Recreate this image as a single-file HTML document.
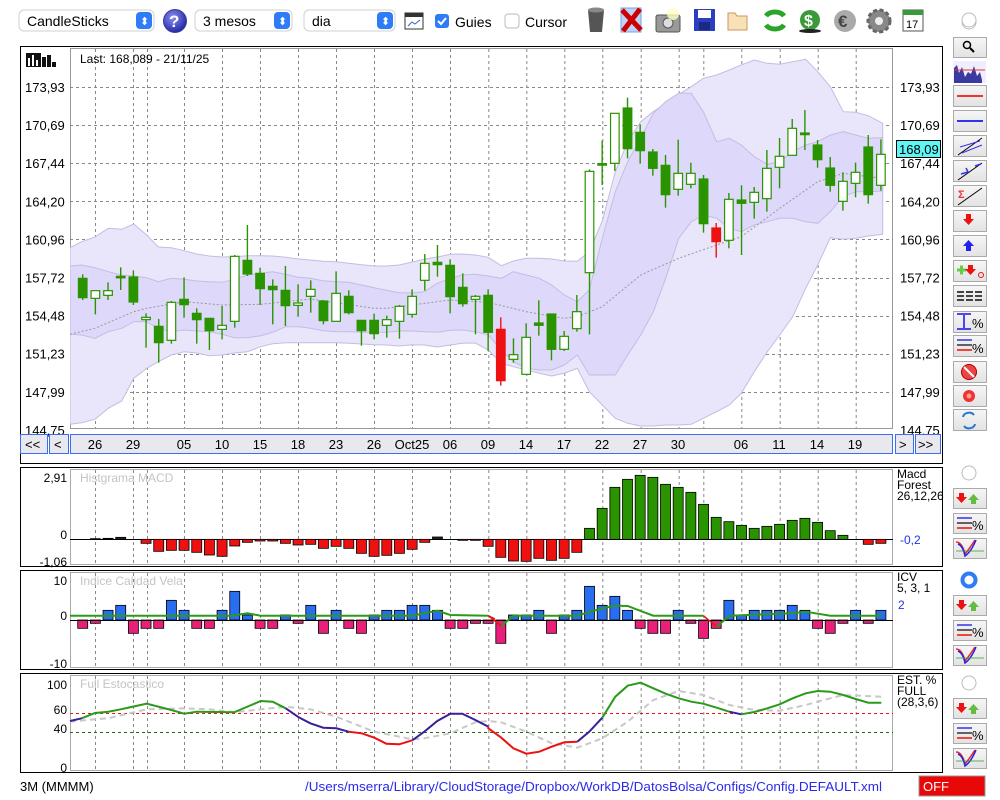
<!DOCTYPE html>
<html><head><meta charset="utf-8"><style>
html,body{margin:0;padding:0;background:#fff;width:1000px;height:800px;overflow:hidden}
svg{display:block;font-family:"Liberation Sans",Arial,sans-serif}
</style></head><body>
<svg id="s" width="1000" height="800" viewBox="0 0 1000 800" xmlns="http://www.w3.org/2000/svg">
<defs>
<clipPath id="cp"><rect x="70" y="48" width="823" height="380"/></clipPath>
<linearGradient id="btn" x1="0" y1="0" x2="0" y2="1"><stop offset="0" stop-color="#f6f6f6"/><stop offset="1" stop-color="#e2e2e2"/></linearGradient>
<radialGradient id="help" cx="0.4" cy="0.35" r="0.7"><stop offset="0" stop-color="#8a8ff0"/><stop offset="1" stop-color="#1c22a0"/></radialGradient>
</defs>
<g font-size="14">
<rect x="19" y="10" width="135" height="21" rx="5" fill="#fff" stroke="#d0d0d0"/>
<text x="27" y="26">CandleSticks</text>
<rect x="136" y="12" width="16" height="17" rx="4" fill="#2e7cf6"/><text x="140" y="25" fill="#fff" font-size="11">⬍</text>
<circle cx="175" cy="21" r="11.5" fill="url(#help)" stroke="#3a3aa0"/><text x="169" y="27" fill="#fff" font-size="17" font-weight="bold">?</text>
<rect x="195" y="10" width="97" height="21" rx="5" fill="#fff" stroke="#d0d0d0"/>
<text x="203" y="26">3 mesos</text>
<rect x="274" y="12" width="16" height="17" rx="4" fill="#2e7cf6"/><text x="278" y="25" fill="#fff" font-size="11">⬍</text>
<rect x="304" y="10" width="91" height="21" rx="5" fill="#fff" stroke="#d0d0d0"/>
<text x="312" y="26">dia</text>
<rect x="377" y="12" width="16" height="17" rx="4" fill="#2e7cf6"/><text x="381" y="25" fill="#fff" font-size="11">⬍</text>
<rect x="405" y="13" width="18" height="16" fill="#fff" stroke="#333"/><rect x="405" y="13" width="18" height="4" fill="#333"/><path d="M408 26 l4 -4 3 2 5 -4" stroke="#36c" fill="none"/>
<rect x="435" y="14" width="14" height="14" rx="3" fill="#2e7cf6"/><path d="M438 21 l3 3 5 -6" stroke="#fff" stroke-width="2" fill="none"/>
<text x="455" y="27">Guies</text>
<rect x="505" y="14" width="14" height="14" rx="3" fill="#fff" stroke="#bbb"/>
<text x="525" y="27">Cursor</text>
</g>
<path d="M588 10 h16 l-2 22 h-12z" fill="#555"/><ellipse cx="596" cy="10" rx="8" ry="2.5" fill="#888"/>
<rect x="621" y="8" width="20" height="24" fill="#bcd4f6" stroke="#7aa0e0"/><path d="M622 10 L641 30 M640 9 L623 31" stroke="#c00" stroke-width="5"/>
<rect x="656" y="15" width="24" height="17" rx="2" fill="#999" stroke="#555"/><circle cx="668" cy="23" r="5" fill="#ddd" stroke="#555"/><circle cx="673" cy="14" r="6" fill="#ffffc0" opacity="0.8"/>
<rect x="694" y="9" width="21" height="22" fill="#2a3fbf"/><rect x="698" y="10" width="13" height="8" fill="#fff"/><rect x="699" y="22" width="11" height="8" fill="#1a2a80"/>
<path d="M728 13 h7 l2 3 h10 v14 h-19z" fill="#f8e0b8" stroke="#c89a58"/>
<path d="M766 16 a10 7 0 0 1 18 0 M784 25 a10 7 0 0 1 -18 0" stroke="#2aa52a" stroke-width="5" fill="none"/>
<circle cx="810" cy="20" r="10" fill="#3a9a3a"/><text x="804" y="26" fill="#fff" font-size="16" font-weight="bold">$</text><ellipse cx="810" cy="31" rx="11" ry="2" fill="#222"/>
<circle cx="845" cy="21" r="11" fill="#aaa"/><text x="838" y="27" fill="#444" font-size="17" font-weight="bold">€</text>
<circle cx="879" cy="21" r="11" fill="#888" stroke="#666" stroke-width="3" stroke-dasharray="4 2.5"/><circle cx="879" cy="21" r="4" fill="#eee"/>
<rect x="903" y="10" width="20" height="21" fill="#fff" stroke="#555"/><rect x="903" y="10" width="20" height="5" fill="#3a9a3a"/><text x="906" y="28" font-size="11">17</text>
<circle cx="969" cy="22" r="7" fill="#fff" stroke="#bbb"/>

<rect x="20.5" y="46.5" width="922" height="417" fill="#fff" stroke="#000"/>
<rect x="70.5" y="48.5" width="822" height="380" fill="#fff" stroke="#999"/>
<rect x="20.5" y="467.5" width="922" height="99" fill="#fff" stroke="#000"/>
<rect x="70.5" y="469.5" width="822" height="95" fill="#fff" stroke="#aaa"/>
<rect x="20.5" y="570.5" width="922" height="99" fill="#fff" stroke="#000"/>
<rect x="70.5" y="572.5" width="822" height="95" fill="#fff" stroke="#aaa"/>
<rect x="20.5" y="673.5" width="922" height="99" fill="#fff" stroke="#000"/>
<rect x="70.5" y="675.5" width="822" height="95" fill="#fff" stroke="#aaa"/>
<g id="grid" stroke="#888" stroke-dasharray="3 3" stroke-width="1"></g>
<g id="bands" clip-path="url(#cp)"></g>
<g id="plots"></g>
<g fill="#111"><rect x="26" y="53" width="15" height="14"/><rect x="42" y="57" width="4" height="10"/><rect x="47" y="55" width="4" height="12"/><rect x="52" y="62" width="4" height="5"/></g>
<g fill="#fff"><rect x="28" y="58" width="2" height="8"/><rect x="32" y="55" width="2" height="11"/><rect x="36" y="60" width="2" height="6"/></g>
<text x="80" y="63" font-size="12">Last: 168,089 - 21/11/25</text>
<g font-size="13" id="ylab"></g>
<rect x="896.5" y="140.5" width="44" height="17" fill="#5ff5f5" stroke="#000"/>
<text x="899" y="154" font-size="13">168,09</text>
<g stroke="#3a6ef0" fill="#e8e8ee">
<rect x="20.5" y="434.5" width="27" height="19"/><rect x="49.5" y="434.5" width="19" height="19"/>
<rect x="70.5" y="434.5" width="822" height="19"/>
<rect x="895.5" y="434.5" width="18" height="19"/><rect x="915.5" y="434.5" width="25" height="19"/>
</g>
<g font-size="13" id="xlab"><text x="25" y="449">&lt;&lt;</text><text x="54" y="449">&lt;</text><text x="899" y="449">&gt;</text><text x="918" y="449">&gt;&gt;</text></g>
<g font-size="12" fill="#c4c4c4"><text x="80" y="482">Histgrama MACD</text><text x="80" y="585">Indice Calidad Vela</text><text x="80" y="688">Full Estocastico</text></g>
<g font-size="12" text-anchor="end">
<text x="67" y="482">2,91</text><text x="67" y="539">0</text><text x="67" y="566">-1,06</text>
<text x="67" y="585">10</text><text x="67" y="620">0</text><text x="67" y="668">-10</text>
<text x="67" y="689">100</text><text x="67" y="714">60</text><text x="67" y="733">40</text><text x="67" y="772">0</text>
</g>
<g font-size="12">
<text x="897" y="478">Macd</text><text x="897" y="489">Forest</text><text x="897" y="500">26,12,26</text>
<text x="900" y="544" fill="#2233ee">-0,2</text>
<text x="897" y="581">ICV</text><text x="897" y="592">5, 3, 1</text>
<text x="898" y="609" fill="#2233ee">2</text>
<text x="897" y="684">EST. %</text><text x="897" y="695">FULL</text><text x="897" y="706">(28,3,6)</text>
</g>
<text x="20" y="791" font-size="13">3M (MMMM)</text>
<text x="305" y="791" font-size="13" fill="#2a2aee" textLength="577" lengthAdjust="spacingAndGlyphs">/Users/mserra/Library/CloudStorage/Dropbox/WorkDB/DatosBolsa/Configs/Config.DEFAULT.xml</text>
<rect x="919" y="776" width="66" height="20" fill="#e80808" stroke="#999"/>
<text x="923" y="791" font-size="13" fill="#fff">OFF</text>
<g id="side"></g>
</svg>
<script>
var NS="http://www.w3.org/2000/svg";
function el(p,t,a){var e=document.createElementNS(NS,t);for(var k in a)e.setAttribute(k,a[k]);p.appendChild(e);return e;}
var S=document.getElementById('s'),G=document.getElementById('grid'),B=document.getElementById('bands'),P=document.getElementById('plots');
function cx(i){return 82.7+12.67*i;}
var gx=[95,133,147,184,222,260,298,336,374,412,450,488.3,526.3,564.3,602.3,640.7,678.7,703.3,741.3,779.7,817.7,855.7];
var panels=[[49,428],[470,564],[573,667],[676,770]];
gx.forEach(function(x){panels.forEach(function(p){el(G,'line',{x1:x+0.5,y1:p[0],x2:x+0.5,y2:p[1]});});});
var yl=['173,93','170,69','167,44','164,20','160,96','157,72','154,48','151,23','147,99','144,75'];
var YL=document.getElementById('ylab');
for(var k=0;k<10;k++){var y=87+k*38.1;if(k<9)el(G,'line',{x1:70,y1:Math.round(y)+0.5,x2:893,y2:Math.round(y)+0.5});
 var t=el(YL,'text',{x:25,y:y+5});t.textContent=yl[k];var t2=el(YL,'text',{x:900,y:y+5});t2.textContent=yl[k];}
var XL=document.getElementById('xlab');
[[95,'26'],[133,'29'],[184,'05'],[222,'10'],[260,'15'],[298,'18'],[336,'23'],[374,'26'],[412,'Oct25'],[450,'06'],[488,'09'],[526,'14'],[564,'17'],[602,'22'],[640,'27'],[678,'30'],[741,'06'],[779,'11'],[817,'14'],[855,'19']].forEach(function(a){var t=el(XL,'text',{x:a[0],y:449,'text-anchor':'middle'});t.textContent=a[1];});
function z4(a){return a.map(function(p){return [15+p[0]/3,45+p[1]/3];});}
function z5(a){return a.map(function(p){return [480+p[0]/3,45+p[1]/3];});}
function z6(a){return a.map(function(p){return [15+p[0]/3,465+p[1]/3];});}
function z7(a){return a.map(function(p){return [480+p[0]/3,465+p[1]/3];});}
function pts(a){return a.map(function(p){return p[0].toFixed(1)+','+p[1].toFixed(1);}).join(' ');}
var ou=z4([[165,608],[200,590],[240,576],[280,550],[320,553],[356,537],[395,570],[430,606],[469,608],[508,617],[545,627],[583,633],[622,636],[658,635],[697,632],[737,632],[773,633],[812,637],[851,642],[886,645],[925,649],[964,650],[1001,655],[1040,659],[1078,663],[1114,663],[1153,660],[1192,651],[1228,643],[1267,636],[1306,628],[1342,627],[1381,630],[1420,637]]).concat(z5([[64,662],[100,648],[139,640],[178,640],[215,642],[253,648],[292,649],[328,620],[367,528],[406,380],[443,290],[482,230],[520,200],[557,175],[596,148],[634,125],[670,100],[710,90],[748,75],[784,60],[823,45],[862,55],[899,58],[938,50],[977,43],[1013,80],[1051,125],[1090,200],[1127,202],[1165,212],[1208,235]]));
var ol=z4([[165,1138],[200,1133],[240,1123],[280,1090],[320,1068],[356,1000],[395,970],[430,950],[469,930],[508,920],[545,924],[583,932],[622,930],[658,924],[697,920],[737,905],[773,896],[812,893],[851,893],[886,893],[925,893],[964,893],[1001,895],[1040,897],[1078,899],[1114,900],[1153,903],[1192,899],[1228,900],[1267,906],[1306,900],[1342,895],[1381,894],[1420,915]]).concat(z5([[64,955],[100,965],[139,975],[178,985],[215,993],[253,985],[292,970],[328,1040],[367,1080],[406,1120],[443,1135],[482,1143],[520,1143],[557,1140],[596,1140],[634,1138],[670,1120],[710,1100],[748,1080],[784,1045],[823,980],[862,920],[899,870],[938,815],[977,730],[1013,660],[1051,578],[1090,583],[1127,580],[1165,573],[1208,568]]));
var iu=z4([[165,663],[200,660],[240,668],[280,680],[320,690],[356,693],[395,698],[430,710],[469,700],[508,703],[545,708],[583,710],[622,712],[658,703],[697,690],[737,685],[773,680],[812,688],[851,697],[886,700],[925,707],[964,710],[1001,712],[1040,720],[1078,728],[1114,736],[1153,743],[1192,744],[1228,740],[1267,715],[1306,700],[1342,690],[1381,688],[1420,693]]).concat(z5([[64,700],[100,680],[139,690],[178,700],[215,720],[253,750],[292,770],[328,735],[367,580],[406,440],[443,350],[482,280],[520,205],[557,170],[596,145],[634,145],[670,200],[710,290],[748,280],[784,300],[823,335],[862,358],[899,350],[938,320],[977,300],[1013,290],[1051,270],[1090,260],[1127,270],[1165,280],[1208,278]]));
var il=z4([[165,868],[200,870],[240,880],[280,860],[320,850],[356,830],[395,830],[430,850],[469,860],[508,855],[545,858],[583,860],[622,868],[658,878],[697,878],[737,872],[773,862],[812,845],[851,845],[886,850],[925,857],[964,860],[1001,860],[1040,862],[1078,862],[1114,862],[1153,858],[1192,858],[1228,860],[1267,862],[1306,856],[1342,855],[1381,860],[1420,870]]).concat(z5([[64,915],[100,950],[139,970],[178,975],[215,975],[253,960],[292,930],[328,990],[367,990],[406,990],[443,930],[482,870],[520,800],[557,700],[596,580],[634,530],[670,510],[710,520],[748,550],[784,560],[823,540],[862,530],[899,520],[938,520],[977,530],[1013,535],[1051,500],[1090,455],[1127,440],[1165,440],[1208,438]]));
el(B,'polygon',{points:pts(ou.concat(ol.slice().reverse())),fill:'#e9e6fb',stroke:'#c2bde2'});
el(B,'polygon',{points:pts(iu.concat(il.slice().reverse())),fill:'#ded8fa',stroke:'#c2bde2'});
var ma=z4([[165,868],[240,850],[356,800],[395,790],[508,770],[622,780],[737,778],[886,762],[1078,790],[1114,790],[1306,765],[1420,772]]).concat(z5([[139,800],[253,820],[292,815],[367,785],[482,690],[596,640],[710,600],[784,575],[899,490],[1013,410],[1090,385],[1204,400]]));
el(B,'polyline',{points:pts(ma),fill:'none',stroke:'#999','stroke-dasharray':'2 2'});
var C4=[[688,700,758,765,'F'],[737,737,760,808,'H'],[712,737,751,765,'H'],[667,694,698,735,'F'],[676,696,771,780,'F'],[805,817,824,908,'H'],[822,844,893,953,'F'],[768,772,886,896,'H'],[697,763,779,818,'F'],[790,805,824,896,'F'],[820,820,857,915,'F'],[783,841,853,883,'H'],[630,634,829,848,'H'],[540,646,687,693,'F'],[668,685,731,780,'F'],[703,724,734,838,'F'],[663,736,782,843,'F'],[718,774,781,815,'H'],[706,733,754,803,'H'],[765,768,827,838,'F'],[679,745,829,829,'H'],[736,754,803,808,'F'],[826,826,857,902,'F'],[806,826,866,883,'F'],[812,824,841,878,'H'],[780,784,829,881,'H'],[733,754,808,818,'H'],[627,655,706,737,'H'],[600,652,659,695,'F'],[643,661,755,805,'F'],[685,727,776,785,'F'],[750,754,763,868,'H'],[733,751,862,918,'F']];
var C5=[[817,853,1007,1022,'R'],[880,929,943,953,'H'],[835,877,988,988,'H'],[766,834,841,872,'F'],[807,807,913,946,'F'],[858,874,913,918,'H'],[750,800,851,860,'H'],[373,379,683,868,'H'],[287,356,359,420,'F'],[205,205,355,378,'H'],[158,189,311,340,'F'],[238,262,317,356,'F'],[312,321,370,392,'F'],[330,361,449,488,'F'],[284,385,433,452,'H'],[353,385,418,430,'H'],[390,402,536,563,'F'],[534,549,590,638,'R'],[444,463,586,610,'H'],[421,465,475,630,'F'],[426,442,472,521,'H'],[315,370,461,500,'H'],[279,334,367,430,'H'],[222,250,331,333,'H'],[195,264,269,315,'F'],[285,300,344,368,'F'],[336,369,421,440,'F'],[382,409,469,497,'H'],[353,382,415,457,'H'],[270,306,449,476,'F'],[283,328,421,437,'H']];
var C=C4.concat(C5);
C.forEach(function(c,i){var x=cx(i),f=function(v){return 45+v/3;};
 var col=c[4]=='R'?'#ee1111':'#2a9400';
 el(P,'line',{x1:x,y1:f(c[0]),x2:x,y2:f(c[3]),stroke:col,'stroke-width':1.4});
 var h=Math.max(f(c[2])-f(c[1]),1.5);
 el(P,'rect',{x:x-4.3,y:f(c[1]),width:8.6,height:h,fill:c[4]=='H'?'#fff':col,stroke:col,'stroke-width':1.2});
});
var M=[223,221,220,217,223,235,259,256,256,262,270,274,243,232,228,228,235,240,238,250,244,250,265,274,271,265,253,232,216,223,226,226,244,277,288,289,280,286,280,262,190,130,67,43,31,37,58,67,82,118,157,170,181,190,184,178,166,160,172,197,211,223,238,235];
el(P,'line',{x1:70,y1:539.5,x2:893,y2:539.5,stroke:'#000'});
M.forEach(function(v,i){if(Math.abs(v-223)<1)return;var y=465+v/3,z=465+223/3;var x=cx(i);
 var col=v>223?'#ee1111':'#2a9400';if(Math.abs(v-223)<8)col=v>223?'#ee1111':'#222';
 el(P,'rect',{x:x-5,y:Math.min(y,z),width:10,height:Math.abs(y-z),fill:col,stroke:'#000','stroke-width':0.8});});
var I=[490,475,436,421,505,490,490,406,436,490,490,436,379,450,490,490,450,475,421,505,436,490,505,450,436,436,421,421,436,490,490,475,475,535,450,450,436,505,450,436,364,421,394,436,490,505,505,436,475,520,490,406,450,436,436,436,421,436,490,505,475,436,475,436];
I.forEach(function(v,i){var y=465+v/3,z=465+465/3,x=cx(i);
 el(P,'rect',{x:x-5,y:Math.min(y,z),width:10,height:Math.abs(y-z),fill:v>465?'#ea1f7a':'#2a6ef0',stroke:'#000','stroke-width':0.8});});
el(P,'line',{x1:70,y1:620.5,x2:893,y2:620.5,stroke:'#000'});
function pl(a,col,w,d){var o={points:pts(a),fill:'none',stroke:col,'stroke-width':w};if(d)o['stroke-dasharray']=d;el(P,'polyline',o);}
pl(z6([[165,452],[650,452],[697,445],[737,452],[1192,452],[1267,437],[1306,450],[1420,452]]),'#2a9a1a',2);
pl(z6([[1420,452],[1440,462]]).concat(z7([[25,452]])).concat(z7([[64,483]])),'#ee1111',1.5);
pl(z7([[64,483],[100,452],[290,452],[367,430],[406,422],[443,423],[520,452],[670,452]]),'#2a9a1a',2);
pl(z7([[670,452],[710,485]]),'#ee1111',1.5);
pl(z7([[710,485],[748,452],[938,445],[977,440],[1051,452],[1204,452]]),'#2a9a1a',2);
el(P,'line',{x1:70,y1:713.5,x2:893,y2:713.5,stroke:'#ee1111','stroke-dasharray':'3 3'});
el(P,'line',{x1:70,y1:732.5,x2:893,y2:732.5,stroke:'#226622','stroke-dasharray':'3 3'});
pl(z6([[165,770],[240,763],[280,760],[356,742],[395,733],[508,730],[583,733],[658,742],[737,733],[812,725],[886,733],[964,755],[1078,800],[1153,815],[1192,823],[1228,820],[1306,805],[1381,772],[1420,768]]).concat(z7([[64,772],[139,800],[215,835],[292,848],[367,820],[443,770],[520,705],[596,678],[670,690],[748,720],[823,735],[899,737],[977,720],[1051,700],[1090,690],[1204,695]])),'#c8c8c8',2,'6 4');
pl(z6([[165,768],[200,760]]),'#3a1f9a',2);
pl(z6([[200,760],[240,744],[280,740],[317,733],[395,716],[469,735],[508,746],[545,740],[658,742],[737,708],[773,710],[812,730]]),'#2a9a1a',2);
pl(z6([[812,730],[851,757],[886,775],[925,788],[964,790],[1001,800]]),'#3a1f9a',2);
pl(z6([[1001,800],[1040,805],[1078,818],[1114,836],[1153,838],[1192,826]]),'#ee1111',2);
pl(z6([[1192,826],[1228,800],[1267,768],[1306,746],[1342,746],[1381,765],[1420,785]]),'#3a1f9a',2);
pl(z6([[1420,785]]).concat(z7([[25,790],[64,818],[100,850],[139,866],[178,860],[215,845],[253,832],[292,830]])),'#ee1111',2);
pl(z7([[292,830],[328,800],[367,758]]),'#3a1f9a',2);
pl(z7([[367,758],[406,695],[443,662],[482,653],[520,670],[557,686],[596,700],[634,710],[670,716],[710,728],[748,740]]),'#2a9a1a',2);
pl(z7([[748,740],[784,748]]),'#3a1f9a',2);
pl(z7([[784,748],[823,741],[862,730],[899,718],[938,700],[977,685],[1013,678],[1051,680],[1090,690],[1127,702],[1165,713],[1204,713]]),'#2a9a1a',2);
var SD=document.getElementById('side');
function btn(y,h){el(SD,'rect',{x:953.5,y:y+0.5,width:33,height:h,fill:'url(#btn)',stroke:'#aaa'});}
function radio(y,sel){if(sel){el(SD,'circle',{cx:969,cy:y,r:6.5,fill:'#fff',stroke:'#2e7cf6','stroke-width':4});}else el(SD,'circle',{cx:969,cy:y,r:7,fill:'#fff',stroke:'#bbb'});}
radio(20);
btn(37,20);el(SD,'circle',{cx:967,cy:45,r:3.5,fill:'none',stroke:'#000','stroke-width':1.5});el(SD,'line',{x1:970,y1:48,x2:974,y2:52,stroke:'#000','stroke-width':2});
el(SD,'rect',{x:953,y:61,width:33,height:22,fill:'#eef'});el(SD,'path',{d:'M954 83 V68 l3 -3 2 8 3 -6 3 10 3 -5 3 2 3 -8 3 10 3 -4 2 8 V83z',fill:'#3a3aa0'});el(SD,'path',{d:'M954 70 h31',stroke:'#e33','stroke-width':1});
var ys=[85,110,135,160,185,210,235,260,285,311,335,361,385,409];
ys.forEach(function(y){btn(y,21);});
function L(d,c,w){el(SD,'path',{d:d,stroke:c,'stroke-width':w||2,fill:'none'});}
L('M957 96h26','#e33');L('M957 121h26','#33e');
L('M958 155 L982 138','#000',1);L('M960 147 L980 141 M962 153 L982 145','#33e',1);
L('M958 180 L982 163','#000',1);L('M961 174 l7 -2 M968 172 l-2 -4','#33e',1.5);L('M975 166 l6 -2','#33e',1.5);
L('M958 205 L982 188','#000',1);el(SD,'text',{x:958,y:198,'font-size':'11',fill:'#e33','font-weight':'bold'}).textContent='Σ';
el(SD,'path',{d:'M966 214 h5 v5 h3 l-5.5 6 -5.5 -6 h3z',fill:'#e11'});
el(SD,'path',{d:'M966 251 h5 v-5 h3 l-5.5 -6 -5.5 6 h3z',fill:'#22e'});
el(SD,'path',{d:'M957 270 h9 M961.5 265.5 v9',stroke:'#6c4','stroke-width':3});el(SD,'path',{d:'M968 265 h5 v4 h3 l-5.5 6 -5.5 -6 h3z',fill:'#e11'});el(SD,'circle',{cx:981,cy:275,r:2.5,fill:'none',stroke:'#e11'});
L('M957 292h7 M966 292h7 M975 292h7 M957 296h7 M966 296h7 M975 296h7 M957 300h7 M966 300h7 M975 300h7','#444',2);
L('M957 314h14 M957 329h14 M964 315v13','#11e',1.5);el(SD,'text',{x:972,y:328,'font-size':'13'}).textContent='%';
L('M957 340h15','#33e',1.5);L('M957 345h15','#333',1.5);L('M957 350h15','#e44',2);el(SD,'text',{x:972,y:353,'font-size':'13'}).textContent='%';
el(SD,'circle',{cx:969,cy:372,r:7.5,fill:'#e44',stroke:'#a00'});L('M964 367 L974 377','#fff',2);
el(SD,'circle',{cx:969,cy:396,r:6,fill:'#e33'});el(SD,'circle',{cx:969,cy:396,r:2.5,fill:'#f99'});
L('M963 417 a6 5 0 0 1 11 -2 M975 424 a6 5 0 0 1 -11 2','#27c',2);
function trio(r,sel){radio(r,sel);var y=r+15;btn(y,20);
 el(SD,'path',{d:'M959 '+(y+5)+' h5 v4 h3 l-5.5 6 -5.5 -6 h3z',fill:'#e11'});el(SD,'path',{d:'M971 '+(y+16)+' h5 v-4 h3 l-5.5 -6 -5.5 6 h3z',fill:'#6b4'});
 y+=25;btn(y,20);L('M957 '+(y+5)+'h15','#33e',1.5);L('M957 '+(y+10)+'h15','#333',1.5);L('M957 '+(y+15)+'h15','#e44',2);el(SD,'text',{x:972,y:y+17,'font-size':'13'}).textContent='%';
 y+=25;btn(y,20);L('M956 '+(y+4)+' q6 0 9 12 q5 -6 10 -14','#e22',1.5);L('M958 '+(y+6)+' q5 2 7 12 q6 -4 11 -16','#22e',1.5);L('M956 '+(y+13)+'h28','#393',0.8);}
trio(473,false);trio(580,true);trio(683,false);
</script>
</body></html>
